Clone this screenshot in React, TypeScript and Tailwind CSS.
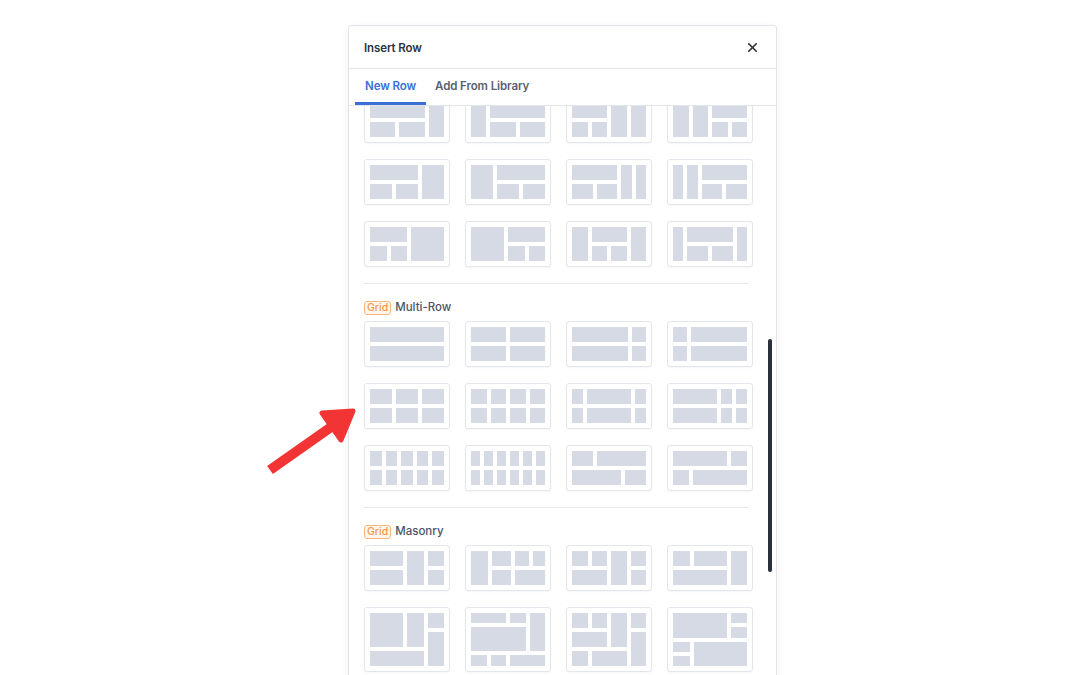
import { X } from "lucide-react";

type Layout = { grid: string; cells: string[] };

// row templates
const singleRow: Layout[][] = [
  [
    {
      grid: "grid-cols-[5fr_5fr_3fr] grid-rows-2",
      cells: ["col-start-1 col-end-3 row-start-1", "col-start-1 row-start-2", "col-start-2 row-start-2", "col-start-3 row-start-1 row-span-2"],
    },
    {
      grid: "grid-cols-[3fr_5fr_5fr] grid-rows-2",
      cells: ["col-start-1 row-start-1 row-span-2", "col-start-2 col-end-4 row-start-1", "col-start-2 row-start-2", "col-start-3 row-start-2"],
    },
    {
      grid: "grid-cols-4 grid-rows-2",
      cells: ["col-start-1 col-end-3 row-start-1", "col-start-1 row-start-2", "col-start-2 row-start-2", "col-start-3 row-start-1 row-span-2", "col-start-4 row-start-1 row-span-2"],
    },
    {
      grid: "grid-cols-4 grid-rows-2",
      cells: ["col-start-1 row-start-1 row-span-2", "col-start-2 row-start-1 row-span-2", "col-start-3 col-end-5 row-start-1", "col-start-3 row-start-2", "col-start-4 row-start-2"],
    },
  ],
  [
    {
      grid: "grid-cols-3 grid-rows-2",
      cells: ["col-start-1 col-end-3 row-start-1", "col-start-1 row-start-2", "col-start-2 row-start-2", "col-start-3 row-start-1 row-span-2"],
    },
    {
      grid: "grid-cols-3 grid-rows-2",
      cells: ["col-start-1 row-start-1 row-span-2", "col-start-2 col-end-4 row-start-1", "col-start-2 row-start-2", "col-start-3 row-start-2"],
    },
    {
      grid: "grid-cols-[2fr_2fr_1fr_1fr] grid-rows-2",
      cells: ["col-start-1 col-end-3 row-start-1", "col-start-1 row-start-2", "col-start-2 row-start-2", "col-start-3 row-start-1 row-span-2", "col-start-4 row-start-1 row-span-2"],
    },
    {
      grid: "grid-cols-[1fr_1fr_2fr_2fr] grid-rows-2",
      cells: ["col-start-1 row-start-1 row-span-2", "col-start-2 row-start-1 row-span-2", "col-start-3 col-end-5 row-start-1", "col-start-3 row-start-2", "col-start-4 row-start-2"],
    },
  ],
  [
    {
      grid: "grid-cols-[1fr_1fr_2fr] grid-rows-2",
      cells: ["col-start-1 col-end-3 row-start-1", "col-start-1 row-start-2", "col-start-2 row-start-2", "col-start-3 row-start-1 row-span-2"],
    },
    {
      grid: "grid-cols-[2fr_1fr_1fr] grid-rows-2",
      cells: ["col-start-1 row-start-1 row-span-2", "col-start-2 col-end-4 row-start-1", "col-start-2 row-start-2", "col-start-3 row-start-2"],
    },
    {
      grid: "grid-cols-4 grid-rows-2",
      cells: ["col-start-1 row-start-1 row-span-2", "col-start-2 col-end-4 row-start-1", "col-start-2 row-start-2", "col-start-3 row-start-2", "col-start-4 row-start-1 row-span-2"],
    },
    {
      grid: "grid-cols-[1fr_2fr_2fr_1fr] grid-rows-2",
      cells: ["col-start-1 row-start-1 row-span-2", "col-start-2 col-end-4 row-start-1", "col-start-2 row-start-2", "col-start-3 row-start-2", "col-start-4 row-start-1 row-span-2"],
    },
  ],
];

const even = (n: number) => Array.from({ length: n }, () => "");

const multiRow: Layout[][] = [
  [
    { grid: "grid-cols-1 grid-rows-2", cells: even(2) },
    { grid: "grid-cols-2 grid-rows-2", cells: even(4) },
    { grid: "grid-cols-[4fr_1fr] grid-rows-2", cells: even(4) },
    { grid: "grid-cols-[1fr_4fr] grid-rows-2", cells: even(4) },
  ],
  [
    { grid: "grid-cols-3 grid-rows-2", cells: even(6) },
    { grid: "grid-cols-4 grid-rows-2", cells: even(8) },
    { grid: "grid-cols-[1fr_4fr_1fr] grid-rows-2", cells: even(6) },
    { grid: "grid-cols-[4fr_1fr_1fr] grid-rows-2", cells: even(6) },
  ],
  [
    { grid: "grid-cols-5 grid-rows-2", cells: even(10) },
    { grid: "grid-cols-6 grid-rows-2", cells: even(12) },
    {
      grid: "grid-cols-[21fr_24fr_21fr] grid-rows-2",
      cells: ["col-start-1 row-start-1", "col-start-2 col-end-4 row-start-1", "col-start-1 col-end-3 row-start-2", "col-start-3 row-start-2"],
    },
    {
      grid: "grid-cols-[16fr_34fr_16fr] grid-rows-2",
      cells: ["col-start-1 col-end-3 row-start-1", "col-start-3 row-start-1", "col-start-1 row-start-2", "col-start-2 col-end-4 row-start-2"],
    },
  ],
];

const masonry: Layout[][] = [
  [
    {
      grid: "grid-cols-[2fr_1fr_1fr] grid-rows-2",
      cells: ["col-start-1 row-start-1", "col-start-1 row-start-2", "col-start-2 row-start-1 row-span-2", "col-start-3 row-start-1", "col-start-3 row-start-2"],
    },
    {
      grid: "grid-cols-[17fr_18fr_14fr_12fr] grid-rows-2",
      cells: ["col-start-1 row-start-1 row-span-2", "col-start-2 row-start-1", "col-start-3 row-start-1", "col-start-4 row-start-1", "col-start-2 row-start-2", "col-start-3 col-end-5 row-start-2"],
    },
    {
      grid: "grid-cols-4 grid-rows-2",
      cells: ["col-start-1 row-start-1", "col-start-2 row-start-1", "col-start-3 row-start-1 row-span-2", "col-start-4 row-start-1", "col-start-1 col-end-3 row-start-2", "col-start-4 row-start-2"],
    },
    {
      grid: "grid-cols-[1fr_2fr_1fr] grid-rows-2",
      cells: ["col-start-1 row-start-1", "col-start-2 row-start-1", "col-start-3 row-start-1 row-span-2", "col-start-1 col-end-3 row-start-2"],
    },
  ],
  [
    {
      grid: "grid-cols-[2fr_1fr_1fr] grid-rows-3",
      cells: ["col-start-1 row-start-1 row-span-2", "col-start-2 row-start-1 row-span-2", "col-start-3 row-start-1", "col-start-3 row-start-2 row-span-2", "col-start-1 col-end-3 row-start-3"],
    },
    {
      grid: "grid-cols-4 grid-rows-[10fr_24fr_11fr]",
      cells: ["col-start-1 col-end-3 row-start-1", "col-start-3 row-start-1", "col-start-4 row-start-1 row-span-2", "col-start-1 col-end-4 row-start-2", "col-start-1 row-start-3", "col-start-2 row-start-3", "col-start-3 col-end-5 row-start-3"],
    },
    {
      grid: "grid-cols-4 grid-rows-3",
      cells: ["col-start-1 row-start-1", "col-start-2 row-start-1", "col-start-3 row-start-1 row-span-2", "col-start-4 row-start-1", "col-start-1 col-end-3 row-start-2", "col-start-4 row-start-2 row-span-2", "col-start-1 row-start-3", "col-start-2 col-end-4 row-start-3"],
    },
    {
      grid: "grid-cols-[1fr_2fr_1fr] grid-rows-4",
      cells: ["col-start-1 col-end-3 row-start-1 row-span-2", "col-start-3 row-start-1", "col-start-3 row-start-2", "col-start-1 row-start-3", "col-start-1 row-start-4", "col-start-2 col-end-4 row-start-3 row-span-2"],
    },
  ],
];

function Card({ layout, tall }: { layout: Layout; tall?: boolean }) {
  return (
    <button
      className={`rounded-[3px] border border-[#e3e6eb] bg-white p-[5px] shadow-[0_1px_2px_rgba(0,0,0,0.04)] ${tall ? "h-[65px]" : "h-[46px]"}`}
    >
      <div className={`grid h-full w-full gap-1 ${layout.grid}`}>
        {layout.cells.map((c, i) => (
          <div key={i} className={`bg-[#d5dae4] ${c}`} />
        ))}
      </div>
    </button>
  );
}

function CardRows({ rows, tallLast }: { rows: Layout[][]; tallLast?: boolean }) {
  return (
    <div className="flex flex-col gap-4">
      {rows.map((row, r) => (
        <div key={r} className="grid grid-cols-4 gap-[15px]">
          {row.map((l, i) => (
            <Card key={i} layout={l} tall={tallLast && r === rows.length - 1} />
          ))}
        </div>
      ))}
    </div>
  );
}

function SectionLabel({ text }: { text: string }) {
  return (
    <div className="mb-[6px] mt-[17px] flex h-[14px] items-center gap-1">
      <span className="rounded-[3px] border border-[#f5b87a] bg-[#fff6ec] px-[2px] text-[10.5px] leading-[12px] font-medium text-[#ef9a4a]">
        Grid
      </span>
      <span className="text-[11.5px] font-medium text-[#4a5568]">{text}</span>
    </div>
  );
}

function Arrow() {
  return (
    <svg className="absolute left-[260px] top-[395px]" width="110" height="90" viewBox="0 0 110 90">
      <line x1="10" y1="75" x2="74" y2="30" stroke="#f23434" strokeWidth="10" />
      <polygon points="62,18 93,16 81,45" fill="#f23434" stroke="#f23434" strokeWidth="5" strokeLinejoin="round" />
    </svg>
  );
}

export default function App() {
  return (
    <div className="relative h-[675px] w-full overflow-hidden bg-white pl-[348px] pt-[25px] font-['Inter','Liberation_Sans',sans-serif]">
      <div className="relative flex h-[700px] w-[429px] flex-col rounded-[3px] border border-[#e2e5ea] bg-white shadow-[0_2px_8px_rgba(0,0,0,0.06)]">
        <div className="flex h-[43px] shrink-0 items-center justify-between border-b border-[#e2e5ea] pl-[15px] pr-[16px] pt-[3px]">
          <span className="text-[11.5px] font-semibold tracking-[-0.1px] text-[#2d3342]">Insert Row</span>
          <X size={15} strokeWidth={2.6} className="-mt-[3px] text-[#2b2f38]" />
        </div>
        <div className="flex h-[37px] shrink-0 items-stretch border-b border-[#e2e5ea] pl-[6px]">
          <button className="border-b-[3px] border-[#3b6fd8] px-[10px] pt-[3px] text-[11.5px] font-semibold tracking-[-0.1px] text-[#3b6fd8]">
            New Row
          </button>
          <button className="border-b-[3px] border-transparent px-[9px] pt-[3px] text-[11.5px] font-semibold tracking-[-0.1px] text-[#5a6170]">
            Add From Library
          </button>
        </div>
        <div className="flex-1 overflow-hidden">
          <div className="-mt-[9px] pl-[15px] pr-[23px]">
            <CardRows rows={singleRow} />
            <div className="mr-[5px] mt-4 border-t border-[#e5e7eb]" />
            <SectionLabel text="Multi-Row" />
            <CardRows rows={multiRow} />
            <div className="mr-[5px] mt-4 border-t border-[#e5e7eb]" />
            <SectionLabel text="Masonry" />
            <CardRows rows={masonry} tallLast />
          </div>
        </div>
        <div className="absolute right-[4px] top-[313px] h-[233px] w-[4px] rounded-full bg-[#2a303c]" />
      </div>
      <Arrow />
    </div>
  );
}
